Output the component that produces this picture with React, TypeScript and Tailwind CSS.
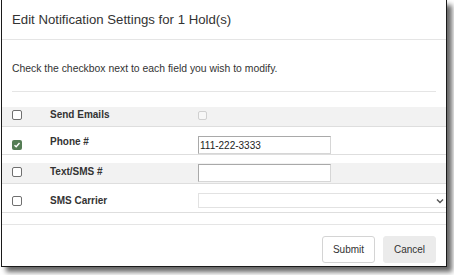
import React from 'react'

const font = "font-['Liberation_Sans',Arial,sans-serif]"

function Box({ checked = false, className = '' }: { checked?: boolean; className?: string }) {
  if (checked) {
    return (
      <span className={`flex h-[10px] w-[10px] items-center justify-center rounded-[2px] bg-[#557d55] ${className}`}>
        <svg width="8" height="8" viewBox="0 0 8 8">
          <path d="M1.5 4.2 L3.2 5.8 L6.5 2" stroke="#fff" strokeWidth="1.4" fill="none" />
        </svg>
      </span>
    )
  }
  return <span className={`block h-[10px] w-[10px] rounded-[2px] border border-[#6f6f6f] bg-white ${className}`} />
}

export default function App() {
  return (
    <div className={`min-h-[275px] w-[454px] bg-white pl-px ${font}`}>
      <div className="flex h-[267px] w-[446px] flex-col overflow-hidden border-x border-b border-[#1a1a1a] bg-white shadow-[5px_5px_5px_rgba(0,0,0,0.6)]">
        <div className="flex h-[40px] items-center border-b border-[#e5e5e5] pl-[10px] text-[13.2px] text-[#333]">
          Edit Notification Settings for 1 Hold(s)
        </div>

        <div className="px-[10px] pt-[23px]">
          <p className="text-[10.4px] leading-[12px] text-[#333]">Check the checkbox next to each field you wish to modify.</p>
          <div className="mt-[16px] border-t border-[#e5e5e5]" />
        </div>

        <div className="mt-[15px] text-[10px] font-bold text-[#333]">
          <div className="flex h-[20px] items-start border-b border-[#dedede] bg-[#f2f2f2]">
            <Box className="ml-[10px] mt-[3px]" />
            <span className="ml-[28px] mt-[2px] w-[148px] leading-[12px]">Send Emails</span>
            <span className="mt-[4px] block h-[9px] w-[9px] rounded-[2px] border border-[#d0d0d0] bg-[#f7f7f7]" />
          </div>

          <div className="flex h-[28px] items-start border-b border-[#dedede]">
            <Box checked className="ml-[10px] mt-[13px]" />
            <span className="ml-[28px] mt-[9px] w-[148px] leading-[12px]">Phone #</span>
            <input
              readOnly
              value="111-222-3333"
              className="mt-[9px] h-[18px] w-[133px] border border-[#a9a9a9] border-b-[#d6d6d6] border-r-[#d6d6d6] px-[1px] text-[10px] font-normal text-[#222] outline-none"
            />
          </div>

          <div className="h-[8px]" />

          <div className="flex h-[21px] items-start border-b border-[#dedede] bg-[#f2f2f2]">
            <Box className="ml-[10px] mt-[4px]" />
            <span className="ml-[28px] mt-[3px] w-[148px] leading-[12px]">Text/SMS #</span>
            <input
              readOnly
              value=""
              className="mt-[1px] h-[18px] w-[133px] border border-[#a9a9a9] border-b-[#d6d6d6] border-r-[#d6d6d6] bg-white px-[1px] text-[10px] font-normal outline-none"
            />
          </div>

          <div className="flex h-[29px] items-start border-b border-[#dedede]">
            <Box className="ml-[10px] mt-[12px]" />
            <span className="ml-[28px] mt-[11px] w-[148px] leading-[12px]">SMS Carrier</span>
            <div className="mt-[9px] flex h-[15px] flex-1 items-center justify-end border border-r-0 border-[#e2e2e2] pr-[2px]">
              <svg width="8" height="6" viewBox="0 0 8 6">
                <path d="M1 1.5 L4 4.5 L7 1.5" stroke="#555" strokeWidth="1.4" fill="none" />
              </svg>
            </div>
          </div>
        </div>

        <div className="mt-[11px] flex flex-1 items-start justify-end gap-[8px] border-t border-[#e5e5e5] pr-[10px] pt-[11px] text-[10px] text-[#333]">
          <button className="h-[27px] w-[53px] rounded-[3px] border border-[#d4d4d4] bg-white">Submit</button>
          <button className="h-[27px] w-[53px] rounded-[3px] border border-[#ebebeb] bg-[#ebebeb]">Cancel</button>
        </div>
      </div>
    </div>
  )
}
